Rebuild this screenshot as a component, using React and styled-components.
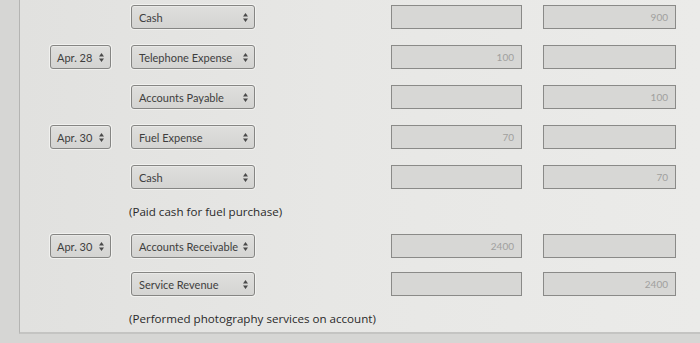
import React from "react";
import styled, { createGlobalStyle } from "styled-components";

const GlobalStyle = createGlobalStyle`
  html, body {
    margin: 0;
    padding: 0;
    background: #d9d9d7;
    font-family: Lato, "Open Sans", sans-serif;
  }
`;

const Screen = styled.div`
  width: 700px;
  height: 343px;
  overflow: hidden;
  background: #d6d6d4;
`;

const Panel = styled.div`
  margin-left: 19px;
  height: 334px;
  box-sizing: border-box;
  border-left: 1px solid #b4b4b2;
  border-bottom: 2px solid #c4c4c2;
  background: linear-gradient(90deg, #e1e1df 0%, #e7e7e5 45%, #ebebe9 100%);
  padding: 5px 0 0 30px;
  display: flex;
  flex-direction: column;
  gap: 16px;
`;

const Row = styled.div`
  display: flex;
  align-items: center;
  height: 24px;
  margin-top: ${(p) => p.$pull || 0}px;
`;

const DateSlot = styled.div`
  width: 61px;
  flex: none;
  margin-right: 20px;
`;

const AccountSlot = styled.div`
  width: 124px;
  flex: none;
  margin-right: 136px;
`;

const Select = styled.div`
  height: 24px;
  box-sizing: border-box;
  display: flex;
  align-items: center;
  justify-content: space-between;
  padding: 0 6px 0 ${(p) => (p.$date ? 6 : 7)}px;
  border: 1px solid #858583;
  border-radius: 3px;
  background: linear-gradient(180deg, #dfdfdd 0%, #d4d4d2 100%);
  box-shadow: 0 0 0 1px #f1f1ef, inset 0 1px 0 #e9e9e7;
  color: #3e3e3e;
  font-size: 11px;
  white-space: nowrap;
`;

const Arrows = styled.svg`
  width: 5px;
  height: 9px;
  flex: none;
`;

const Amount = styled.div`
  width: ${(p) => (p.$credit ? 133 : 131)}px;
  margin-left: ${(p) => (p.$credit ? 21 : 0)}px;
  flex: none;
  height: 24px;
  box-sizing: border-box;
  border: 1px solid #8a8a88;
  background: #d7d7d5;
  display: flex;
  align-items: center;
  justify-content: flex-end;
  padding-right: 7px;
  color: #a0a09e;
  font-size: 10px;
`;

const Note = styled.div`
  height: 13px;
  line-height: 13px;
  padding-left: 79px;
  font-family: "Open Sans", Lato, sans-serif;
  font-size: 11.6px;
  color: #2a2a2a;
  white-space: nowrap;
`;

function UpDown() {
  return (
    <Arrows viewBox="0 0 5 9">
      <path d="M2.5 0 L5 3.6 L0 3.6 Z M2.5 9 L5 5.4 L0 5.4 Z" fill="#4a4a4a" />
    </Arrows>
  );
}

function Dropdown({ label, date }) {
  return (
    <Select $date={date}>
      <span>{label}</span>
      <UpDown />
    </Select>
  );
}

const rows = [
  { account: "Cash", credit: "900" },
  { date: "Apr. 28", account: "Telephone Expense", debit: "100" },
  { account: "Accounts Payable", credit: "100" },
  { date: "Apr. 30", account: "Fuel Expense", debit: "70" },
  { account: "Cash", credit: "70" },
  { note: "(Paid cash for fuel purchase)" },
  { date: "Apr. 30", account: "Accounts Receivable", debit: "2400" },
  { account: "Service Revenue", credit: "2400", pull: -2 },
  { note: "(Performed photography services on account)" },
];

export default function App() {
  return (
    <Screen>
      <GlobalStyle />
      <Panel>
        {rows.map((r, i) =>
          r.note ? (
            <Note key={i}>{r.note}</Note>
          ) : (
            <Row key={i} $pull={r.pull}>
              <DateSlot>{r.date && <Dropdown label={r.date} date />}</DateSlot>
              <AccountSlot>
                <Dropdown label={r.account} />
              </AccountSlot>
              <Amount>{r.debit}</Amount>
              <Amount $credit>{r.credit}</Amount>
            </Row>
          )
        )}
      </Panel>
    </Screen>
  );
}
